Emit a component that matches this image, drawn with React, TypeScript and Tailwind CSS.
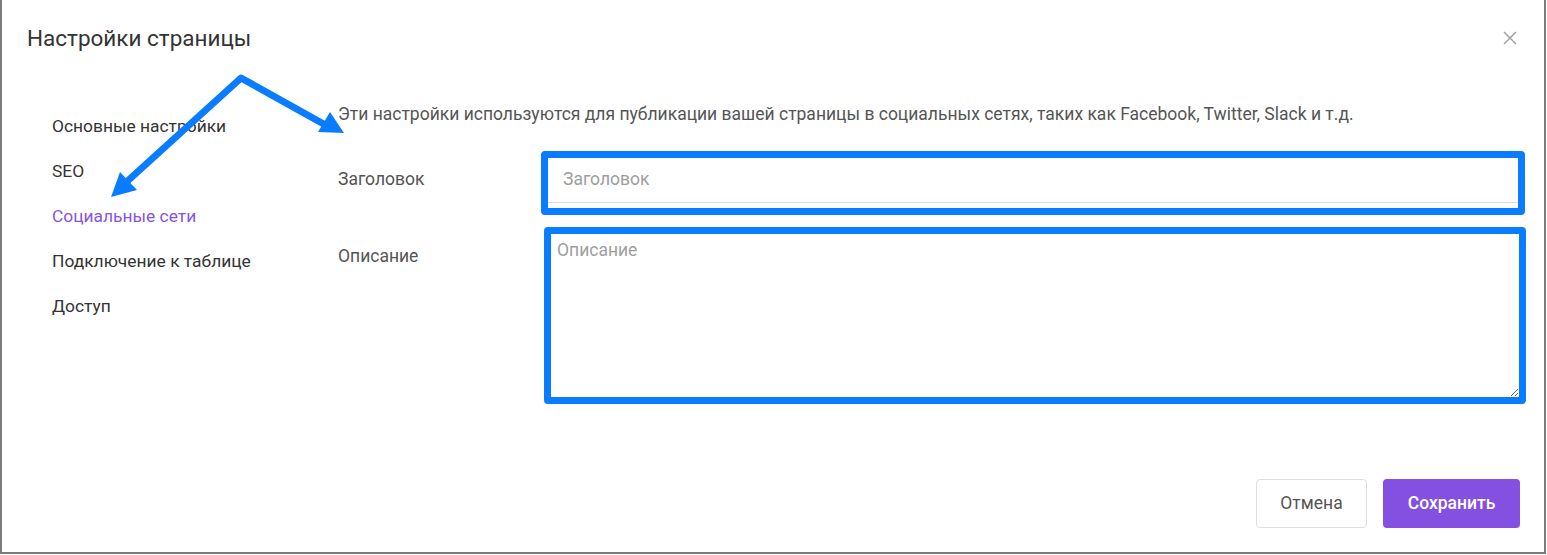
import React from "react";

const navItems = [
  "Основные настройки",
  "SEO",
  "Социальные сети",
  "Подключение к таблице",
  "Доступ",
];

export default function App() {
  return (
    <div className="w-[1547px] h-[555px] bg-white overflow-hidden relative" style={{ fontFamily: "Roboto, 'Noto Sans', sans-serif" }}>
      <div className="w-[1546px] h-[554px] flex flex-col bg-white border-l-2 border-r-2 border-b-2 border-[#7c7c7c]">
        {/* header */}
        <div className="flex items-center justify-between h-[76px] pl-[25px] pr-[26px]">
          <h1 className="text-[22.5px] leading-[28px] text-[#333] font-normal">Настройки страницы</h1>
          <button className="w-[16px] h-[16px] flex items-center justify-center text-[#9a9a9a]">
            <svg width="14" height="14" viewBox="0 0 14 14" fill="none" stroke="currentColor" strokeWidth="1.3">
              <path d="M1 1L13 13M13 1L1 13" />
            </svg>
          </button>
        </div>
        {/* body */}
        <div className="flex pl-[50px]">
          <nav className="w-[286px] pt-[28px] flex flex-col">
            {navItems.map((item, i) => (
              <div
                key={item}
                className={`h-[45px] flex items-center text-[17.4px] ${i === 2 ? "text-[#8753e3]" : "text-[#333]"}`}
              >
                {item}
              </div>
            ))}
          </nav>
          <div className="flex-1 pt-[26px] pr-[19px]">
            <p className="text-[17.5px] leading-[24px] text-[#555]">
              Эти настройки используются для публикации вашей страницы в социальных сетях, таких как Facebook, Twitter, Slack и т.д.
            </p>
            <div className="flex mt-[25px]">
              <label className="w-[203px] pt-[16px] text-[17.5px] leading-[24px] text-[#555]">Заголовок</label>
              <div className="flex-1 border-[7px] border-[#0a7cff] rounded-[4px] pb-[5px]">
                <input
                  placeholder="Заголовок"
                  className="w-full h-[45px] pb-[3px] border-b border-[#dcdcdc] px-[15px] text-[17.5px] text-[#333] placeholder:text-[#9e9e9e] outline-none bg-white"
                />
              </div>
            </div>
            <div className="flex mt-[12px]">
              <label className="w-[206px] pt-[17px] text-[17.5px] leading-[24px] text-[#555]">Описание</label>
              <div className="flex-1 border-[7px] border-[#0a7cff] rounded-[4px] -mr-[1px] flex">
                <textarea
                  placeholder="Описание"
                  className="w-full h-[163px] px-[6px] pt-[6px] text-[17.5px] leading-[20px] text-[#333] placeholder:text-[#9e9e9e] outline-none bg-white"
                />
              </div>
            </div>
          </div>
        </div>
        {/* footer */}
        <div className="mt-auto flex justify-end gap-[16px] pr-[24px] pb-[24px]">
          <button className="w-[111px] h-[49px] rounded-[4px] border border-[#dedede] bg-white text-[17.5px] text-[#555]">Отмена</button>
          <button className="w-[137px] h-[49px] rounded-[4px] bg-[#8450e2] text-[17.5px] text-white font-medium">Сохранить</button>
        </div>
      </div>
      {/* annotation arrows */}
      <svg className="absolute left-0 top-0 pointer-events-none" width="400" height="220" viewBox="0 0 400 220">
        <polyline points="122,186 241,78 329,127" fill="none" stroke="#0a7cff" strokeWidth="7" strokeLinejoin="round" />
        <polygon points="111,197 120,172 137,190" fill="#0a7cff" />
        <polygon points="344,133 330,112 318,132" fill="#0a7cff" />
      </svg>
    </div>
  );
}
